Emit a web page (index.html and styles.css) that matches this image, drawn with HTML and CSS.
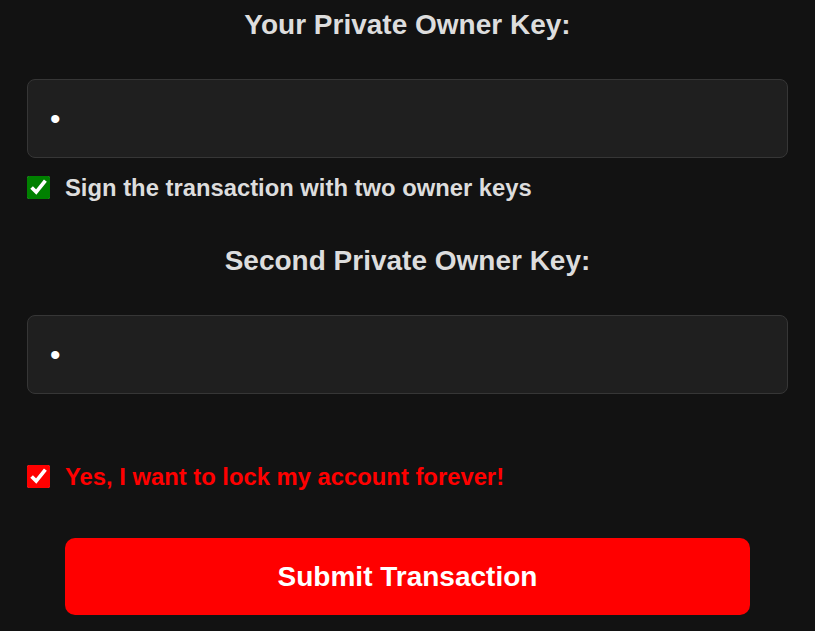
FILE: index.html
```html
<!DOCTYPE html>
<html lang="en">
<head>
    <meta charset="UTF-8">
    <meta name="viewport" content="width=device-width, initial-scale=1.0">
    <title>Lock Account</title>
    <link rel="stylesheet" href="styles.css">
</head>
<body>
    <div class="form">
        <h2 class="key-title">Your Private Owner Key:</h2>
        <input type="password" class="key-input" value="a">

        <label class="check-row">
            <input type="checkbox" class="check green" checked>
            <span>Sign the transaction with two owner keys</span>
        </label>

        <h2 class="key-title second">Second Private Owner Key:</h2>
        <input type="password" class="key-input" value="a">

        <label class="check-row danger">
            <input type="checkbox" class="check red" checked>
            <span>Yes, I want to lock my account forever!</span>
        </label>

        <button class="submit-btn">Submit Transaction</button>
    </div>
</body>
</html>
```

FILE: styles.css
```css
body {
    margin: 0;
    background-color: #121212;
    font-family: "Liberation Sans", Arial, sans-serif;
    color: #dddddd;
}
.form {
    padding: 0 27px;
    display: flex;
    flex-direction: column;
}
.key-title {
    text-align: center;
    font-size: 28px;
    font-weight: bold;
    margin: 6px 0 35px;
    line-height: 38px;
}
.key-title.second {
    margin-top: 42px;
}
.key-input {
    box-sizing: border-box;
    height: 79px;
    width: 100%;
    background: #1f1f1f;
    border: 1px solid #363636;
    border-radius: 8px;
    color: #ffffff;
    font-size: 30px;
    padding: 0 22px;
    outline: none;
}
.check-row {
    display: flex;
    align-items: center;
    gap: 15px;
    margin-top: 17px;
    font-size: 23.8px;
    line-height: 25px;
    font-weight: bold;
}
.check {
    width: 23px;
    height: 23px;
    margin: 0;
}
.check.green {
    accent-color: #008000;
}
.check.red {
    accent-color: #ff0000;
}
.check-row.danger {
    color: #ff0000;
    margin-top: 70px;
}
.submit-btn {
    margin: 49px 38px 0;
    height: 77px;
    background-color: #ff0000;
    color: #ffffff;
    border: none;
    border-radius: 10px;
    font-family: "Liberation Sans", Arial, sans-serif;
    font-size: 28px;
    font-weight: bold;
}
```
